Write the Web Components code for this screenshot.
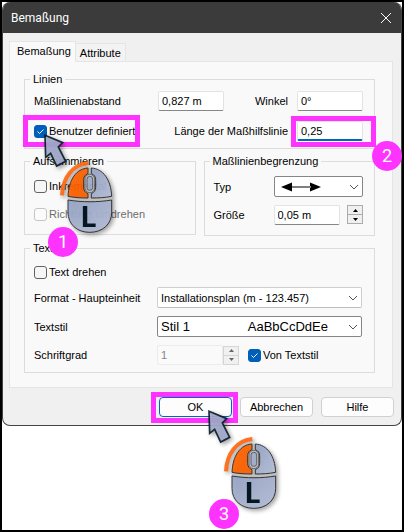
<!DOCTYPE html>
<html lang="de">
<head>
<meta charset="utf-8">
<meta name="viewport" content="width=device-width, initial-scale=1">
<title>Bemaßung</title>
<style>
    body {
        margin: 0;
        font-family: "Liberation Sans", Arial, sans-serif;
        font-size: 11px;
        line-height: 14px;
        color: #000;
    }
</style>
</head>
<body>
<guide-stage>
    <dialog-window heading="Bemaßung">
        <tab-panel first="Bemaßung" second="Attribute">
            <group-box legend="Linien" style="--pad: 5px 11px 7px 9px; --gap: 10px">
                <form-row>
                    <text-field label="Maßlinienabstand" value="0,827 m" style="--label: 124px"></text-field>
                    <text-field label="Winkel" value="0°" style="--space: 9px"></text-field>
                </form-row>
                <form-row>
                    <mark-frame style="--inset: -9px auto -9px -11px; --frame: 117px"><check-field label="Benutzer definiert" checked></check-field></mark-frame>
                    <mark-frame style="--inset: -5px -13px -6px auto; --frame: 85px"><text-field label="Länge der Maßhilfslinie" value="0,25" active style="--space: 9px"></text-field></mark-frame>
                </form-row>
            </group-box>
            <form-row style="--align: stretch; --gap: 8px">
                <group-box legend="Aufsummieren" style="--pad: 8px 11px 10px 9px; --gap: 8px">
                    <form-row><check-field label="Inkremental"></check-field></form-row>
                    <form-row><check-field label="Richtung umdrehen" disabled></check-field></form-row>
                </group-box>
                <group-box legend="Maßlinienbegrenzung" style="--pad: 8px 11px 10px 9px; --gap: 8px">
                    <form-row><select-field label="Typ" arrow strong style="--label: 60px"></select-field></form-row>
                    <form-row><text-field label="Größe" value="0,05 m" style="--label: 60px"></text-field><spin-buttons></spin-buttons></form-row>
                </group-box>
            </form-row>
            <group-box legend="Text" style="--pad: 10px 12px 7px 9px; --gap: 8px">
                <check-field label="Text drehen"></check-field>
                <select-field label="Format - Haupteinheit" value="Installationsplan (m - 123.457)" style="--label: 123px"></select-field>
                <select-field label="Textstil" value="Stil 1" sample="AaBbCcDdEe" strong style="--label: 123px; --size: 13px"></select-field>
                <form-row style="--justify: flex-start">
                    <text-field label="Schriftgrad" value="1" disabled style="--label: 123px"></text-field>
                    <spin-buttons disabled></spin-buttons>
                    <check-field label="Von Textstil" checked style="margin-left: 9px"></check-field>
                </form-row>
            </group-box>
        </tab-panel>
        <mark-frame slot="actions" style="--inset: -5px -6px -6px -8px"><push-button primary>OK</push-button></mark-frame>
        <push-button slot="actions">Abbrechen</push-button>
        <push-button slot="actions">Hilfe</push-button>
    </dialog-window>
    <click-hint slot="overlay" style="left: 41px; top: 131px"></click-hint>
    <click-hint slot="overlay" style="left: 205px; top: 407px"></click-hint>
    <step-badge slot="overlay" style="left: 46px; top: 225px">1</step-badge>
    <step-badge slot="overlay" style="left: 370px; top: 139px">2</step-badge>
    <step-badge slot="overlay" style="left: 207px; top: 497px">3</step-badge>
</guide-stage>

<script>
    // Creates the open shadow root and fills it from a template
    function render(host, html) {
        const template = document.createElement("template");
        template.innerHTML = html;
        const root = host.attachShadow({ mode: "open" });
        root.appendChild(template.content.cloneNode(true));
        return root;
    }

    // Page sheet with the black edge, keeps the overlays above the dialog
    class GuideStage extends HTMLElement {
        constructor() {
            super();
            render(this, `
<style>
    :host {
        display: block;
        position: relative;
        box-sizing: border-box;
        min-height: 100vh;
        border: 2px solid #000;
        background: #fff;
    }
</style>
<slot></slot>
<slot name="overlay"></slot>
`);
        }
    }

    class DialogWindow extends HTMLElement {
        connectedCallback() {
            render(this, `
<style>
    :host {
        display: block;
        overflow: hidden;
        border: 1px solid #444;
        border-top: 0;
        border-radius: 8px;
        background: #f0f0f0;
    }
    header {
        display: flex;
        align-items: center;
        justify-content: space-between;
        height: 31px;
        padding: 0 9px 0 8px;
        background: #3b3b3b;
        color: #fff;
    }
    h1 {
        margin: 0;
        font-family: Roboto, sans-serif;
        font-size: 12px;
        font-weight: normal;
    }
    header button {
        display: flex;
        padding: 0;
        border: 0;
        background: none;
        color: inherit;
    }
    main {
        padding: 8px 8px 9px 6px;
    }
    footer {
        display: flex;
        justify-content: flex-end;
        gap: 8px;
        padding: 0 7px 8px;
    }
</style>
<header>
    <h1>${this.getAttribute("heading")}</h1>
    <button type="button" aria-label="Schließen">
        <svg width="12" height="12" viewBox="0 0 12 12" fill="none" stroke="currentColor"><path d="M1 1l10 10M11 1L1 11"/></svg>
    </button>
</header>
<main><slot></slot></main>
<footer><slot name="actions"></slot></footer>
`);
        }
    }

    class TabPanel extends HTMLElement {
        connectedCallback() {
            render(this, `
<style>
    :host {
        display: block;
    }
    nav {
        display: flex;
        align-items: flex-end;
    }
    button {
        box-sizing: border-box;
        height: 18px;
        padding: 0 4px;
        border: 1px solid #e5e5e5;
        border-width: 1px 1px 0 0;
        background: #f3f3f3;
        font: inherit;
        color: inherit;
    }
    button[aria-selected="true"] {
        position: relative;
        height: 21px;
        margin-bottom: -1px;
        padding: 0 4px 2px 7px;
        border-left-width: 1px;
        background: #f9f9f9;
    }
    section {
        display: flex;
        flex-direction: column;
        gap: 5px;
        padding: 10px 17px 14px 14px;
        border: 1px solid #e5e5e5;
        background: #f9f9f9;
    }
</style>
<nav role="tablist">
    <button type="button" role="tab" aria-selected="true">${this.getAttribute("first")}</button>
    <button type="button" role="tab" aria-selected="false">${this.getAttribute("second")}</button>
</nav>
<section role="tabpanel"><slot></slot></section>
`);
        }
    }

    class GroupBox extends HTMLElement {
        connectedCallback() {
            render(this, `
<style>
    :host {
        display: block;
        flex: 1;
        min-width: 0;
    }
    fieldset {
        min-width: 0;
        margin: 0;
        padding: var(--pad);
        border: 1px solid #dcdcdc;
    }
    legend {
        margin-left: -4px;
        padding: 0 3px;
    }
    div {
        display: flex;
        flex-direction: column;
        gap: var(--gap);
    }
</style>
<fieldset>
    <legend>${this.getAttribute("legend")}</legend>
    <div><slot></slot></div>
</fieldset>
`);
        }
    }

    class FormRow extends HTMLElement {
        constructor() {
            super();
            render(this, `
<style>
    :host {
        display: flex;
        align-items: var(--align, center);
        justify-content: var(--justify, space-between);
        min-height: 20px;
    }
    :host([style*="--gap"]) {
        gap: var(--gap);
    }
</style>
<slot></slot>
`);
        }
    }

    class TextField extends HTMLElement {
        connectedCallback() {
            const disabled = this.hasAttribute("disabled") ? "disabled" : "";
            render(this, `
<style>
    :host {
        display: flex;
        align-items: center;
    }
    label {
        flex: none;
        width: var(--label, auto);
        margin-right: var(--space, 0);
        white-space: nowrap;
    }
    input {
        box-sizing: border-box;
        width: 66px;
        height: 20px;
        padding: 0 3px;
        border: 1px solid #e3e3e3;
        border-bottom-color: #868686;
        border-radius: 2px;
        outline: 0;
        background: #fff;
        font: inherit;
        color: inherit;
    }
    :host([active]) input {
        border-bottom: 2px solid #0067c0;
    }
    input:disabled {
        border-color: #ececec;
        background: #fafafa;
        color: #8a7f8a;
    }
</style>
<label for="field">${this.getAttribute("label")}</label>
<input id="field" type="text" value="${this.getAttribute("value")}" ${disabled}>
`);
        }
    }

    class CheckField extends HTMLElement {
        connectedCallback() {
            const checked = this.hasAttribute("checked") ? "checked" : "";
            const disabled = this.hasAttribute("disabled") ? "disabled" : "";
            render(this, `
<style>
    :host {
        display: flex;
    }
    label {
        display: flex;
        align-items: center;
        gap: 2px;
        white-space: nowrap;
    }
    span {
        display: grid;
    }
    input, svg {
        grid-area: 1 / 1;
        width: 13px;
        height: 13px;
        margin: 0;
    }
    input {
        appearance: none;
        box-sizing: border-box;
        border: 1px solid #626262;
        border-radius: 3px;
        background: #f6f6f6;
    }
    input:checked {
        border-color: #005fb8;
        background: #005fb8;
    }
    svg {
        display: none;
        z-index: 1;
        pointer-events: none;
    }
    input:checked + svg {
        display: block;
    }
    :host([disabled]) label {
        color: #6d6d6d;
    }
    input:disabled {
        border-color: #c5c5c5;
        background: #fbfbfb;
    }
</style>
<label><span><input type="checkbox" ${checked} ${disabled}><svg viewBox="0 0 13 13" fill="none" stroke="#fff"><path d="M3.500 6.500l2 2 4-4"/></svg></span>${this.getAttribute("label")}</label>
`);
        }
    }

    class SelectField extends HTMLElement {
        connectedCallback() {
            const sample = this.getAttribute("sample");
            const arrow = `<svg class="arrow" width="40" height="10" viewBox="0 0 40 10"><path d="M0 5L11 .5v9zM40 5L29 .5v9zM10 4.500h20v1H10z"/></svg>`;
            render(this, `
<style>
    :host {
        display: flex;
        flex: 1;
        align-items: center;
    }
    label {
        flex: none;
        width: var(--label);
        white-space: nowrap;
    }
    div {
        display: grid;
        flex: 1;
        align-items: center;
        min-width: 0;
    }
    select, div > svg, span {
        grid-area: 1 / 1;
    }
    select {
        appearance: none;
        box-sizing: border-box;
        width: 100%;
        height: 21px;
        padding: 0 20px 0 3px;
        border: 1px solid #cfcfcf;
        border-bottom-color: #bdbdbd;
        border-radius: 2px;
        background: #fff;
        font: inherit;
        font-size: var(--size, inherit);
        color: inherit;
    }
    :host([strong]) select {
        border-color: #868686;
    }
    div > svg, span {
        z-index: 1;
        pointer-events: none;
    }
    .chevron {
        justify-self: end;
        margin-right: 4px;
    }
    .arrow {
        margin-left: 7px;
    }
    span {
        justify-self: end;
        margin-right: 34px;
        font-size: 13px;
    }
</style>
<label for="field">${this.getAttribute("label")}</label>
<div>
    <select id="field"><option>${this.getAttribute("value") || ""}</option></select>
    ${sample ? `<span>${sample}</span>` : ""}
    ${this.hasAttribute("arrow") ? arrow : ""}
    <svg class="chevron" width="10" height="6" viewBox="0 0 10 6" fill="none" stroke="#555"><path d="M1 1l4 4 4-4"/></svg>
</div>
`);
        }
    }

    class SpinButtons extends HTMLElement {
        connectedCallback() {
            const disabled = this.hasAttribute("disabled") ? "disabled" : "";
            render(this, `
<style>
    :host {
        display: flex;
        flex-direction: column;
        color: #000;
    }
    :host([disabled]) {
        color: #666;
    }
    button {
        display: flex;
        align-items: center;
        justify-content: center;
        box-sizing: border-box;
        width: 16px;
        height: 10px;
        padding: 0;
        border: 1px solid #adadad;
        background: #f0f0f0;
        color: inherit;
    }
    button:disabled {
        border-color: #d5d5d5;
    }
    button + button {
        margin-top: -1px;
    }
</style>
<button type="button" aria-label="+" ${disabled}><svg width="5" height="3" viewBox="0 0 5 3"><path fill="currentColor" d="M0 3L2.500 0 5 3z"/></svg></button>
<button type="button" aria-label="-" ${disabled}><svg width="5" height="3" viewBox="0 0 5 3"><path fill="currentColor" d="M0 0l2.500 3L5 0z"/></svg></button>
`);
        }
    }

    class PushButton extends HTMLElement {
        constructor() {
            super();
            render(this, `
<style>
    :host {
        display: block;
    }
    button {
        box-sizing: border-box;
        width: 73px;
        height: 20px;
        padding: 0;
        border: 1px solid #d0d0d0;
        border-radius: 4px;
        background: #fdfdfd;
        font: inherit;
        color: inherit;
    }
    :host([primary]) button {
        border-color: #0067c0;
    }
</style>
<button type="button"><slot></slot></button>
`);
        }
    }

    // Magenta frame drawn over the slotted control
    class MarkFrame extends HTMLElement {
        constructor() {
            super();
            render(this, `
<style>
    :host {
        display: block;
        position: relative;
    }
    :host::after {
        content: "";
        position: absolute;
        inset: var(--inset);
        box-sizing: border-box;
        width: var(--frame, auto);
        border: 5px solid #ff33ff;
        pointer-events: none;
    }
</style>
<slot></slot>
`);
        }
    }

    class StepBadge extends HTMLElement {
        constructor() {
            super();
            render(this, `
<style>
    :host {
        display: flex;
        position: absolute;
        align-items: center;
        justify-content: center;
        width: 30px;
        height: 30px;
        border-radius: 50%;
        background: #ff33ff;
        font-family: Roboto, sans-serif;
        font-size: 18px;
        color: #fff;
    }
</style>
<slot></slot>
`);
        }
    }

    // Pointer and mouse with the left button lit
    class ClickHint extends HTMLElement {
        constructor() {
            super();
            render(this, `
<style>
    :host {
        display: block;
        position: absolute;
        pointer-events: none;
    }
    svg {
        display: block;
        overflow: visible;
        filter: drop-shadow(2px 2px 2px rgba(0, 0, 0, .4));
    }
    text {
        font: bold 87px "Open Sans", sans-serif;
    }
</style>
<svg width="72" height="104" viewBox="0 0 216 312">
    <defs>
        <linearGradient id="shell" x1="0" y1="0" x2="1" y2="1">
            <stop offset="0" stop-color="#96a4c6"/>
            <stop offset="1" stop-color="#b8c1da"/>
        </linearGradient>
    </defs>
    <g opacity=".93">
        <path d="M6 7l53 22-13 13 22 43-27 14-18-38-15 12z" fill="#a3a9cc" stroke="#0b1f2b" stroke-width="5"/>
        <path d="M136 90C90 94 59 133 57 187" fill="none" stroke="#ff6a13" stroke-width="12"/>
        <path d="M74 193c0-54 26-88 66-89 40 1 67 35 67 89-44 8-89 8-133 0z" fill="#bcbcbc"/>
        <path d="M74 192c44 8 89 8 133 0v13H74z" fill="#c2c2c2"/>
        <path d="M75 190c2-50 25-83 60-85v17c-9 3-13 10-13 18v23c0 9 5 16 13 19v13c-20 0-40-1-60-5z" fill="#ff6200" stroke="#2c2c2c" stroke-width="3"/>
        <path d="M206 190c-2-50-26-83-61-85v17c9 3 13 10 13 18v23c0 9-5 16-13 19v13c21 0 41-1 61-5z" fill="url(#shell)" stroke="#2c2c2c" stroke-width="3"/>
        <rect x="126" y="124" width="29" height="55" rx="14" fill="#c0c0c0" stroke="#333" stroke-width="2"/>
        <rect x="132" y="130" width="17" height="42" rx="8" fill="#a3afcf" stroke="#333" stroke-width="2"/>
        <path d="M75 201c44 7 88 7 131 0v37c0 36-28 60-66 60s-65-24-65-60z" fill="url(#shell)" stroke="#2c2c2c" stroke-width="3"/>
    </g>
    <text x="112" y="281" fill="#04161f">L</text>
</svg>
`);
        }
    }

    customElements.define("guide-stage", GuideStage);
    customElements.define("dialog-window", DialogWindow);
    customElements.define("tab-panel", TabPanel);
    customElements.define("group-box", GroupBox);
    customElements.define("form-row", FormRow);
    customElements.define("text-field", TextField);
    customElements.define("check-field", CheckField);
    customElements.define("select-field", SelectField);
    customElements.define("spin-buttons", SpinButtons);
    customElements.define("push-button", PushButton);
    customElements.define("mark-frame", MarkFrame);
    customElements.define("step-badge", StepBadge);
    customElements.define("click-hint", ClickHint);
</script>
</body>
</html>
